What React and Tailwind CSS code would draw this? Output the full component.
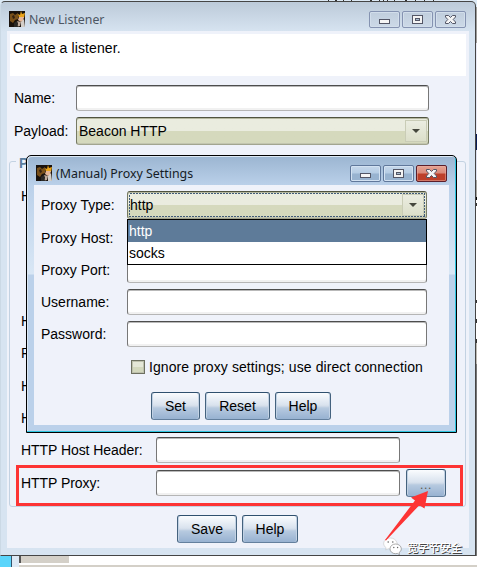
import React from "react";

const FIELD =
  "shrink-0 h-[26px] rounded-[3px] bg-white border border-t-[#4d4d4d] border-l-[#777] border-r-[#777] border-b-[#b5b5b5] shadow-[inset_0_1px_0_#b9b9b9,inset_0_-2px_0_#f1f1f1]";
const SELECT =
  "shrink-0 h-7 rounded-[3px] border border-t-[#50533f] border-l-[#767a62] border-r-[#767a62] border-b-[#a2a58f] bg-linear-to-b from-[#eaecdf] from-50% to-[#d5d9bd] to-50% flex items-center shadow-[inset_0_1px_0_#b4b79f,inset_0_-1px_0_#c3c6b0]";

function Avatar() {
  return (
    <svg className="shrink-0" width="16" height="16" viewBox="0 0 16 16">
      <rect width="16" height="16" fill="#19120d" />
      <path d="M1 3L4 2L6 4L9 2L9 8L6 9L4 12L1 10Z" fill="#79501a" />
      <path d="M3 5L5 4L6 7L4 8Z" fill="#332010" />
      <path d="M9 3L11 4L12 0L13 3L16 2L15 7L10 7Z" fill="#e9a319" />
      <path d="M10 6L15 6L14 10L12 11L9 9Z" fill="#e5b696" />
      <path d="M8 10L12 11L11 15L7 16L9 13Z" fill="#bda99a" />
      <path d="M12 11L15 8L16 16L12 16Z" fill="#d3cec8" />
      <path d="M5 12L8 10L9 16L5 16Z" fill="#2b2926" />
    </svg>
  );
}

function Caption({ type, active }) {
  const tone =
    type === "close" && active
      ? "border-[#5b1f2b] bg-linear-to-b from-[#e6a393] from-0% via-[#d98878] via-48% to-[#bd3f29] to-52% shadow-[inset_0_0_0_1px_#e9b0a480]"
      : active
        ? "border-[#60789b] bg-linear-to-b from-[#c6d8eb] from-0% via-[#b5cce4] via-48% to-[#98b3d0] to-52% shadow-[inset_0_0_0_1px_#d3e2f2]"
        : "border-[#8593b1] bg-linear-to-b from-[#c0cedd] to-[#ccd9e7] shadow-[inset_0_0_0_1px_#d2deeb]";
  return (
    <span className={"block w-[31px] h-[17px] rounded-[2px] border " + tone}>
      <svg className="block" width="29" height="15" viewBox="0 0 29 15" shapeRendering="crispEdges">
        {type === "min" && <rect x="9.5" y="7.5" width="10" height="4" fill="#f6f6f6" stroke="#535666" />}
        {type === "max" && (
          <>
            <rect x="9.5" y="3.5" width="10" height="8" fill="#f3f3f3" stroke="#535666" />
            <rect x="12.5" y="6.5" width="4" height="2" fill="#a9bdd0" stroke="#535666" />
          </>
        )}
        {type === "close" && (
          <g shapeRendering="geometricPrecision">
            <path d="M9.5 3.5H12.5L14.5 5.5L16.5 3.5H19.5V5L17.2 7.5L19.5 10V11.5H16.5L14.5 9.5L12.5 11.5H9.5V10L11.8 7.5L9.5 5Z" fill="#f5f5f5" stroke="#535666" />
          </g>
        )}
      </svg>
    </span>
  );
}

function TitleBar({ title, active, className }) {
  return (
    <div className={"flex shrink-0 items-center " + className}>
      <Avatar />
      <span className="ml-1 flex-1 whitespace-nowrap pt-0.5">{title}</span>
      <div className="flex gap-0.5">
        <Caption type="min" active={active} />
        <Caption type="max" active={active} />
        <Caption type="close" active={active} />
      </div>
    </div>
  );
}

function Button({ children, className = "" }) {
  return (
    <button
      className={
        "h-7 shrink-0 rounded-[3px] border border-t-[#2f506e] border-l-[#44627e] border-r-[#44627e] border-b-[#64809e] bg-linear-to-b from-[#fafcfe] from-0% via-[#d7e1ed] via-49% to-[#8ba8ca] to-100% shadow-[inset_1px_0_0_#c2d2e4,inset_-1px_0_0_#c2d2e4,inset_0_-13px_2px_-1px_#a3bbd880] " +
        className
      }
    >
      {children}
    </button>
  );
}

function Arrow() {
  return (
    <span className="mr-px flex h-[22px] w-[22px] items-center justify-center border border-[#c9ccb6] bg-linear-to-b from-[#ebede1] to-[#dcdfca]">
      <svg width="8" height="4" viewBox="0 0 8 4">
        <path d="M0 0H8L4 4Z" fill="#45473d" />
      </svg>
    </span>
  );
}

function Row({ label, labelClass, children }) {
  return (
    <div className="flex h-7 items-center">
      <span className={"shrink-0 whitespace-nowrap " + labelClass}>{label}</span>
      {children}
    </div>
  );
}

function ProxyDialog() {
  return (
    <div className="absolute left-[26px] top-[155px] flex h-[278px] w-[431px] flex-col rounded-t-[5px] border border-black bg-[linear-gradient(180deg,#9bb5d1_0,#bbd1ea_30px,#d9e7f5_118px,#bbd1ea_119px)] px-[7px] pb-[7px] shadow-[inset_-1px_-1px_0_#2cc5e0,inset_1px_1px_0_#dce8f3]">
      <TitleBar
        title="(Manual) Proxy Settings"
        active
        className="h-[29px] pl-0.5 pr-0.5 pt-[5px] font-['Noto_Sans',sans-serif] text-[12.4px] text-[#151c25]"
      />
      <div className="flex min-h-0 flex-1 flex-col bg-[#eff2fa] pl-[7px] pt-[6px]">
        <Row label="Proxy Type:" labelClass="w-[86px]">
          <div className={SELECT + " relative w-[300px] pl-0.5 pr-px"}>
            <span className="flex-1">http</span>
            <Arrow />
            <svg className="absolute left-px top-px" width="296" height="24" viewBox="0 0 296 24" shapeRendering="crispEdges">
              <rect x=".5" y=".5" width="295" height="23" fill="none" stroke="#415b78" strokeDasharray="2 1" />
            </svg>
          </div>
        </Row>
        <div className="mt-[5px] flex flex-col gap-1">
          <Row label="Proxy Host:" labelClass="w-[86px]">
            <div className={FIELD + " w-[300px]"} />
          </Row>
          <Row label="Proxy Port:" labelClass="w-[86px]">
            <div className={FIELD + " w-[300px]"} />
          </Row>
          <Row label="Username:" labelClass="w-[86px]">
            <div className={FIELD + " w-[300px]"} />
          </Row>
          <Row label="Password:" labelClass="w-[86px]">
            <div className={FIELD + " w-[300px]"} />
          </Row>
        </div>
        <div className="mt-[12px] flex h-[14px] items-center pl-[90px]">
          <span className="h-[14px] w-[14px] shrink-0 border border-[#6d7060] bg-linear-to-b from-[#e4e7d7] from-50% to-[#d3d8bd] to-50% shadow-[inset_0_0_0_1px_#bec1ad]" />
          <span className="ml-1 whitespace-nowrap tracking-[0.09px]">Ignore proxy settings; use direct connection</span>
        </div>
        <div className="mt-[18px] flex gap-[5px] pl-[110px]">
          <Button className="w-[49px]">Set</Button>
          <Button className="w-[65px]">Reset</Button>
          <Button className="w-[56px]">Help</Button>
        </div>
      </div>
      <ul className="absolute left-[100px] top-[63px] h-[46px] w-[300px] border border-black bg-white leading-[22px]">
        <li className="h-[22px] bg-[#5e7b99] pl-px text-white">http</li>
        <li className="h-[22px] pl-px">socks</li>
      </ul>
    </div>
  );
}

function Watermark() {
  return (
    <div className="absolute left-[383px] top-[537px] flex items-center gap-[5px]">
      <svg width="19" height="19" viewBox="0 0 19 19">
        <path d="M7.5 1C3.7 1 .7 3.4 .7 6.5C.7 8.3 1.6 9.8 3.2 10.8L2.7 13L5.2 11.7C6 11.9 7.2 12 8 11.9C14 12 15 7.5 13.7 5C12.8 2.6 10.2 1 7.5 1Z" fill="#fff" stroke="#bbb" strokeWidth=".5" />
        <path d="M12.6 7C9.5 7 7 9.1 7 11.8C7 14.6 9.5 16.7 12.6 16.7L14.4 16.4L16.5 17.7L16.1 15.6C17.5 14.6 18.3 13.3 18.3 11.8C18.3 9.1 15.8 7 12.6 7Z" fill="#fff" stroke="#777" strokeWidth=".6" />
        <g fill="#666">
          <circle cx="5.2" cy="5" r=".8" />
          <circle cx="9.8" cy="5" r=".8" />
          <circle cx="10.8" cy="10.5" r=".7" />
          <circle cx="14.6" cy="10.5" r=".7" />
        </g>
      </svg>
      <span className="whitespace-nowrap font-['Noto_Sans_CJK_SC',sans-serif] text-[11px] font-medium leading-[18px] text-white [text-shadow:1px_1px_0_#444]">
        宽字节安全
      </span>
    </div>
  );
}

export default function App() {
  return (
    <div className="relative h-[567px] w-[477px] overflow-hidden bg-[#dce9f5] font-['Liberation_Sans',Arial,sans-serif] text-[14px] leading-4 text-black">
      <div className="flex">
        <div className="relative mt-px flex h-[555px] w-[476px] shrink-0 flex-col rounded-t-[5px] border border-l-[#cbd9e5] border-t-[#454545] border-r-[#454545] border-b-[#454545] bg-linear-to-b from-[#bccad9] from-0% to-[#d7e4f1] to-[30px] px-[6px] pb-[7px]">
          <TitleBar
            title="New Listener"
            className="h-[29px] pl-0.5 pr-[3px] pt-[5px] font-['Noto_Sans',sans-serif] text-[12.3px] text-[#4d5663]"
          />
          <div className="flex flex-1 flex-col bg-[#eff2fa] px-[3px] pt-[3px]">
            <div className="h-[42px] shrink-0 bg-white pl-[3px] pt-[6px] tracking-[0.1px]">Create a listener.</div>
            <div className="mt-[8px] pl-1">
              <Row label="Name:" labelClass="w-[62px]">
                <div className={FIELD + " w-[353px]"} />
              </Row>
              <div className="h-[5px]" />
              <Row label="Payload:" labelClass="w-[62px]">
                <div className={SELECT + " w-[353px] pl-0.5"}>
                  <span className="flex-1">Beacon HTTP</span>
                  <Arrow />
                </div>
              </Row>
            </div>
            <fieldset className="-ml-px mt-[16px] flex h-[346px] w-[457px] shrink-0 flex-col rounded-[3px] border border-[#c3d2e2] pl-[11px]">
              <span className="-ml-[5px] -mt-[7px] h-4 w-[70px] shrink-0 bg-[#eff2fa] pl-[3px] font-bold text-[#5c7f9f]">P</span>
              <span className="mt-[17px] h-4 shrink-0">H</span>
              <div className="mt-[101px] flex flex-col">
                <span className="h-8 pt-2">H</span>
                <span className="h-[33px] pt-2">P</span>
                <span className="h-8 pt-2">H</span>
                <span className="h-8 pt-2">H</span>
              </div>
              <div className="mt-0.5 flex flex-col gap-[5px]">
                <Row label="HTTP Host Header:" labelClass="w-[135px] -tracking-[0.06px]">
                  <div className={FIELD + " w-[244px]"} />
                </Row>
                <Row label="HTTP Proxy:" labelClass="w-[135px] -tracking-[0.06px]">
                  <div className={FIELD + " w-[244px]"} />
                  <Button className="ml-[6px] w-10 pt-1 text-[12px] tracking-[0.7px] text-[#5b584a]">...</Button>
                </Row>
              </div>
            </fieldset>
            <div className="mt-2 flex gap-[5px] pl-[167px]">
              <Button className="w-[60px]">Save</Button>
              <Button className="w-[56px]">Help</Button>
            </div>
          </div>
        </div>
        <div className="flex w-px flex-col">
          <div className="h-[7px] bg-[#dce9f5]" />
          <div className="h-9 bg-[#a09e9b]" />
          <div className="h-[91px] bg-[#e8eaf5]" />
          <div className="h-4 bg-[#071a55]" />
          <div className="h-[30px] bg-[#dfe2ef]" />
          <div className="h-[17px] bg-[#aaa8a2]" />
          <div className="h-[3px] bg-black" />
          <div className="h-[3px] bg-white" />
          <div className="h-[3px] bg-[#333]" />
          <div className="h-[94px] bg-white" />
          <div className="h-[3px] bg-[#333]" />
          <div className="h-4 bg-white" />
          <div className="h-1 bg-[#333]" />
          <div className="h-4 bg-white" />
          <div className="h-1 bg-[#333]" />
          <div className="h-[21px] bg-[#bcb9b2]" />
          <div className="h-[192px] bg-[#777]" />
        </div>
      </div>

      <div className="flex h-[11px] bg-white">
        <div className="w-[11px] bg-[#5ad5fb]" />
        <div className="w-px bg-[#35536b]" />
        <div className="w-[7px] bg-[#dce9f5]" />
        <div className="flex flex-1 flex-col">
          <div className="flex h-[7px]">
            <div className="w-0.5 bg-[#555]" />
            <div className="w-12 bg-[#d4d0c8]" />
          </div>
          <div className="mt-[2px] flex-1 bg-[#d4d0c8]" />
        </div>
      </div>

      <svg className="absolute left-[327px] top-0" width="110" height="1" viewBox="0 0 110 1" shapeRendering="crispEdges">
        <path d="M1 .5H2M8 .5H10M16 .5H17M24 .5H25M43 .5H45M52 .5H53M56 .5H57M60 .5H61M67 .5H68M78 .5H80M88 .5H89M97 .5H98M106 .5H107" stroke="#333" />
      </svg>

      <ProxyDialog />

      <div className="absolute left-4 top-[465px] h-[41px] w-[447px] border-3 border-[#fd3434]" />
      <Watermark />
      <svg className="absolute left-[384px] top-[490px]" width="46" height="52" viewBox="0 0 46 52">
        <path d="M44 1L40.5 18.5L35.3 15.2L2 50.5L1 50L31 10.5L27 7.5Z" fill="#fd3434" />
      </svg>
    </div>
  );
}
